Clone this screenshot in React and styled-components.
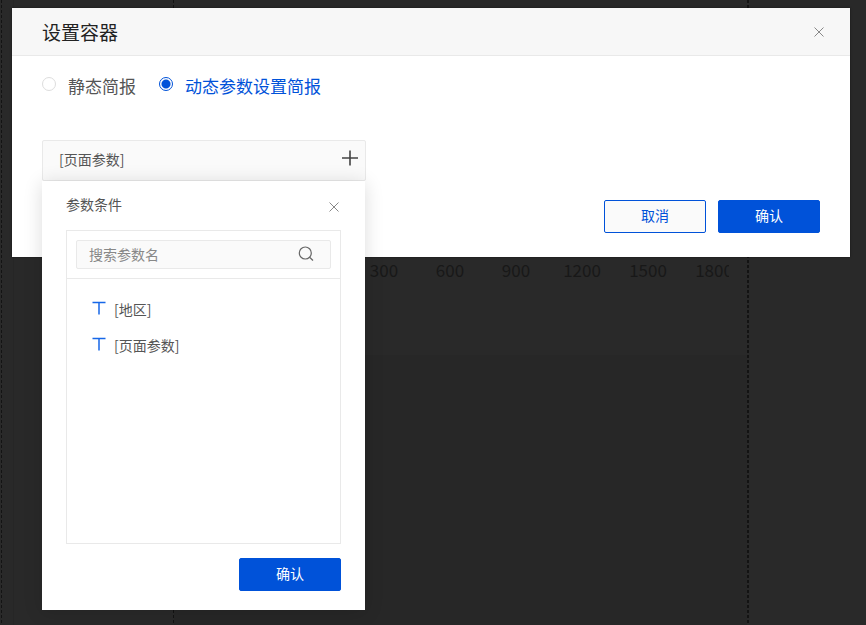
import React, { useState } from "react";
import styled, { createGlobalStyle } from "styled-components";

const blue = "#0052d9";
const line = "#e9e9e9";

const GlobalStyle = createGlobalStyle`
  *, *::before, *::after { box-sizing: border-box; }
  body {
    margin: 0;
    background: #292929;
    color: #555;
    font-family: "Noto Sans CJK SC", "Liberation Sans", sans-serif;
    font-size: 14px;
  }
  button, input { font: inherit; color: inherit; }
  button { cursor: pointer; }
`;

const Page = styled.div`
  position: relative;
  min-height: 100vh;
  padding: 8px 16px 0 12px;
  overflow: hidden;
`;

/* Dimmed report canvas that lies beneath the dialog */
const Canvas = styled.div`
  position: absolute;
  inset: 0;
  display: grid;
  grid-template-columns: 1px 1px 171px 1px 573px 2px 1fr;
`;

const Guide = styled.div`
  background: repeating-linear-gradient(#131313 0 3px, transparent 3px 5px);
`;

const Panel = styled.div`
  margin-left: 11px;
  border-left: 1px solid #262626;
`;

const Chart = styled.div`
  display: flex;
  flex-direction: column;
  background: linear-gradient(transparent 355px, #272727 355px);
`;

const AxisClip = styled.div`
  margin: 257px 18px 0 0;
  overflow: hidden;
`;

const Axis = styled.div`
  display: grid;
  grid-template-columns: repeat(6, 66px);
  justify-content: end;
  margin-right: -18px;
  color: #181818;
  font-size: 17px;
  line-height: 26px;
  text-align: center;
`;

const Dialog = styled.section`
  position: relative;
  background: #fff;
  box-shadow: 0 0 2px rgba(0, 0, 0, 0.5);
`;

const Header = styled.header`
  display: flex;
  align-items: center;
  justify-content: space-between;
  height: 48px;
  padding: 0 26px 0 30px;
  background: #f7f7f7;
  border-bottom: 1px solid ${line};
`;

const Title = styled.h1`
  margin: 0;
  color: #222;
  font-size: 19px;
  font-weight: 400;
  line-height: 28px;
`;

const IconButton = styled.button`
  display: flex;
  padding: 0;
  border: 0;
  background: none;
  color: ${(p) => p.$color || "#888"};
`;

const Body = styled.div`
  padding: 16px 30px 24px;
`;

const Options = styled.div`
  display: flex;
  gap: 23px;
`;

const Option = styled.label`
  display: flex;
  align-items: center;
  gap: 12px;
  color: ${(p) => (p.$active ? blue : "#555")};
  font-size: 17px;
  line-height: 28px;
`;

const Radio = styled.input`
  appearance: none;
  width: 14px;
  height: 14px;
  margin: 0 0 4px;
  border: 1px solid #ddd;
  border-radius: 50%;
  background: #fff;
  &:checked {
    border-color: ${blue};
    background: radial-gradient(${blue} 0 4px, #fff 5px);
  }
`;

const Picker = styled.div`
  position: relative;
  width: 324px;
  margin-top: 40px;
`;

const Field = styled.div`
  display: flex;
  align-items: center;
  justify-content: space-between;
  height: 41px;
  padding: 0 6px 4px 16px;
  border: 1px solid ${line};
  border-radius: 2px;
  background: #fafafa;
  line-height: 20px;
`;

const AddButton = styled(IconButton)`
  margin-bottom: 2px;
`;

const Popup = styled.div`
  position: absolute;
  z-index: 1;
  top: 100%;
  left: 0;
  right: 0;
  margin-right: 1px;
  padding: 14px 24px 19px;
  background: #fff;
  box-shadow: 0 2px 18px rgba(0, 0, 0, 0.14);
`;

const PopupHead = styled.div`
  display: flex;
  align-items: center;
  justify-content: space-between;
  height: 20px;
  margin-bottom: 15px;
`;

const PopupTitle = styled.h2`
  margin: 0 0 2px;
  font-size: 14px;
  font-weight: 400;
  line-height: 20px;
`;

const PopupClose = styled(IconButton)`
  margin: 4px 2px 0 0;
`;

const ListBox = styled.div`
  min-height: 314px;
  border: 1px solid ${line};
`;

const SearchRow = styled.div`
  padding: 9px;
  border-bottom: 1px solid ${line};
`;

const SearchBox = styled.label`
  display: flex;
  align-items: center;
  height: 29px;
  padding: 0 16px 2px 12px;
  border: 1px solid ${line};
  border-radius: 2px;
  background: #fafafa;
  color: #666;
`;

const SearchInput = styled.input`
  flex: 1;
  min-width: 0;
  padding: 0;
  border: 0;
  outline: 0;
  background: none;
  line-height: 20px;
  &::placeholder { color: #888; opacity: 1; }
`;

const Params = styled.ul`
  display: grid;
  gap: 16px;
  margin: 0;
  padding: 20px 25px;
  list-style: none;
`;

const Param = styled.button`
  display: flex;
  align-items: center;
  gap: 8px;
  padding: 0;
  border: 0;
  background: none;
  line-height: 20px;
  svg { margin-bottom: 2px; color: #1767e8; }
`;

const Actions = styled.div`
  display: flex;
  justify-content: flex-end;
  gap: 12px;
  margin-top: ${(p) => p.$top};
`;

const Button = styled.button`
  width: 102px;
  height: 33px;
  padding: 0 0 4px;
  border: 1px solid ${blue};
  border-radius: 2px;
  background: ${(p) => (p.$primary ? blue : "#fafafa")};
  color: ${(p) => (p.$primary ? "#fff" : blue)};
  font-weight: 400;
  line-height: 20px;
`;

const CloseIcon = () => (
  <svg width="10" height="10" viewBox="0 0 10 10" fill="none" stroke="currentColor" aria-hidden="true">
    <path d="M.5.5l9 9M9.5.5l-9 9" />
  </svg>
);

const PlusIcon = () => (
  <svg width="18" height="16" viewBox="0 0 18 16" fill="none" stroke="currentColor" strokeWidth="1.6" aria-hidden="true">
    <path d="M9 .5v15M1 8h16" />
  </svg>
);

const SearchIcon = () => (
  <svg width="16" height="16" viewBox="0 0 16 16" fill="none" stroke="currentColor" strokeWidth="1.2" aria-hidden="true">
    <circle cx="7.3" cy="7" r="6" />
    <path d="M11.6 11.2l3.4 3.3" />
  </svg>
);

const TextIcon = () => (
  <svg width="14" height="14" viewBox="0 0 14 14" fill="none" stroke="currentColor" strokeWidth="1.5" aria-hidden="true">
    <path d="M.5 1.5h13M7 1.5v12" />
  </svg>
);

const ticks = [300, 600, 900, 1200, 1500, 1800];
const params = ["[地区]", "[页面参数]"];
const modes = [
  ["static", "静态简报"],
  ["dynamic", "动态参数设置简报"],
];

export default function App() {
  const [mode, setMode] = useState("dynamic");
  const [selected, setSelected] = useState("[页面参数]");
  const [query, setQuery] = useState("");

  return (
    <>
      <GlobalStyle />
      <Page>
        <Canvas>
          <span />
          <Guide />
          <Panel />
          <Guide />
          <Chart>
            <AxisClip>
              <Axis>
                {ticks.map((t) => <span key={t}>{t}</span>)}
              </Axis>
            </AxisClip>
          </Chart>
          <Guide />
        </Canvas>
        <Dialog role="dialog" aria-labelledby="dialog-title">
          <Header>
            <Title id="dialog-title">设置容器</Title>
            <IconButton aria-label="关闭"><CloseIcon /></IconButton>
          </Header>
          <Body>
            <Options>
              {modes.map(([value, label]) => (
                <Option key={value} $active={mode === value}>
                  <Radio
                    type="radio"
                    name="mode"
                    checked={mode === value}
                    onChange={() => setMode(value)}
                  />
                  {label}
                </Option>
              ))}
            </Options>
            <Picker>
              <Field>
                <span>{selected}</span>
                <AddButton $color="#444" aria-label="添加参数"><PlusIcon /></AddButton>
              </Field>
              <Popup>
                <PopupHead>
                  <PopupTitle>参数条件</PopupTitle>
                  <PopupClose aria-label="关闭参数条件"><CloseIcon /></PopupClose>
                </PopupHead>
                <ListBox>
                  <SearchRow>
                    <SearchBox>
                      <SearchInput
                        aria-label="搜索参数名"
                        placeholder="搜索参数名"
                        value={query}
                        onChange={(e) => setQuery(e.target.value)}
                      />
                      <SearchIcon />
                    </SearchBox>
                  </SearchRow>
                  <Params>
                    {params.filter((p) => p.includes(query)).map((p) => (
                      <li key={p}>
                        <Param onClick={() => setSelected(p)}><TextIcon />{p}</Param>
                      </li>
                    ))}
                  </Params>
                </ListBox>
                <Actions $top="14px">
                  <Button $primary>确认</Button>
                </Actions>
              </Popup>
            </Picker>
            <Actions $top="19px">
              <Button>取消</Button>
              <Button $primary>确认</Button>
            </Actions>
          </Body>
        </Dialog>
      </Page>
    </>
  );
}
